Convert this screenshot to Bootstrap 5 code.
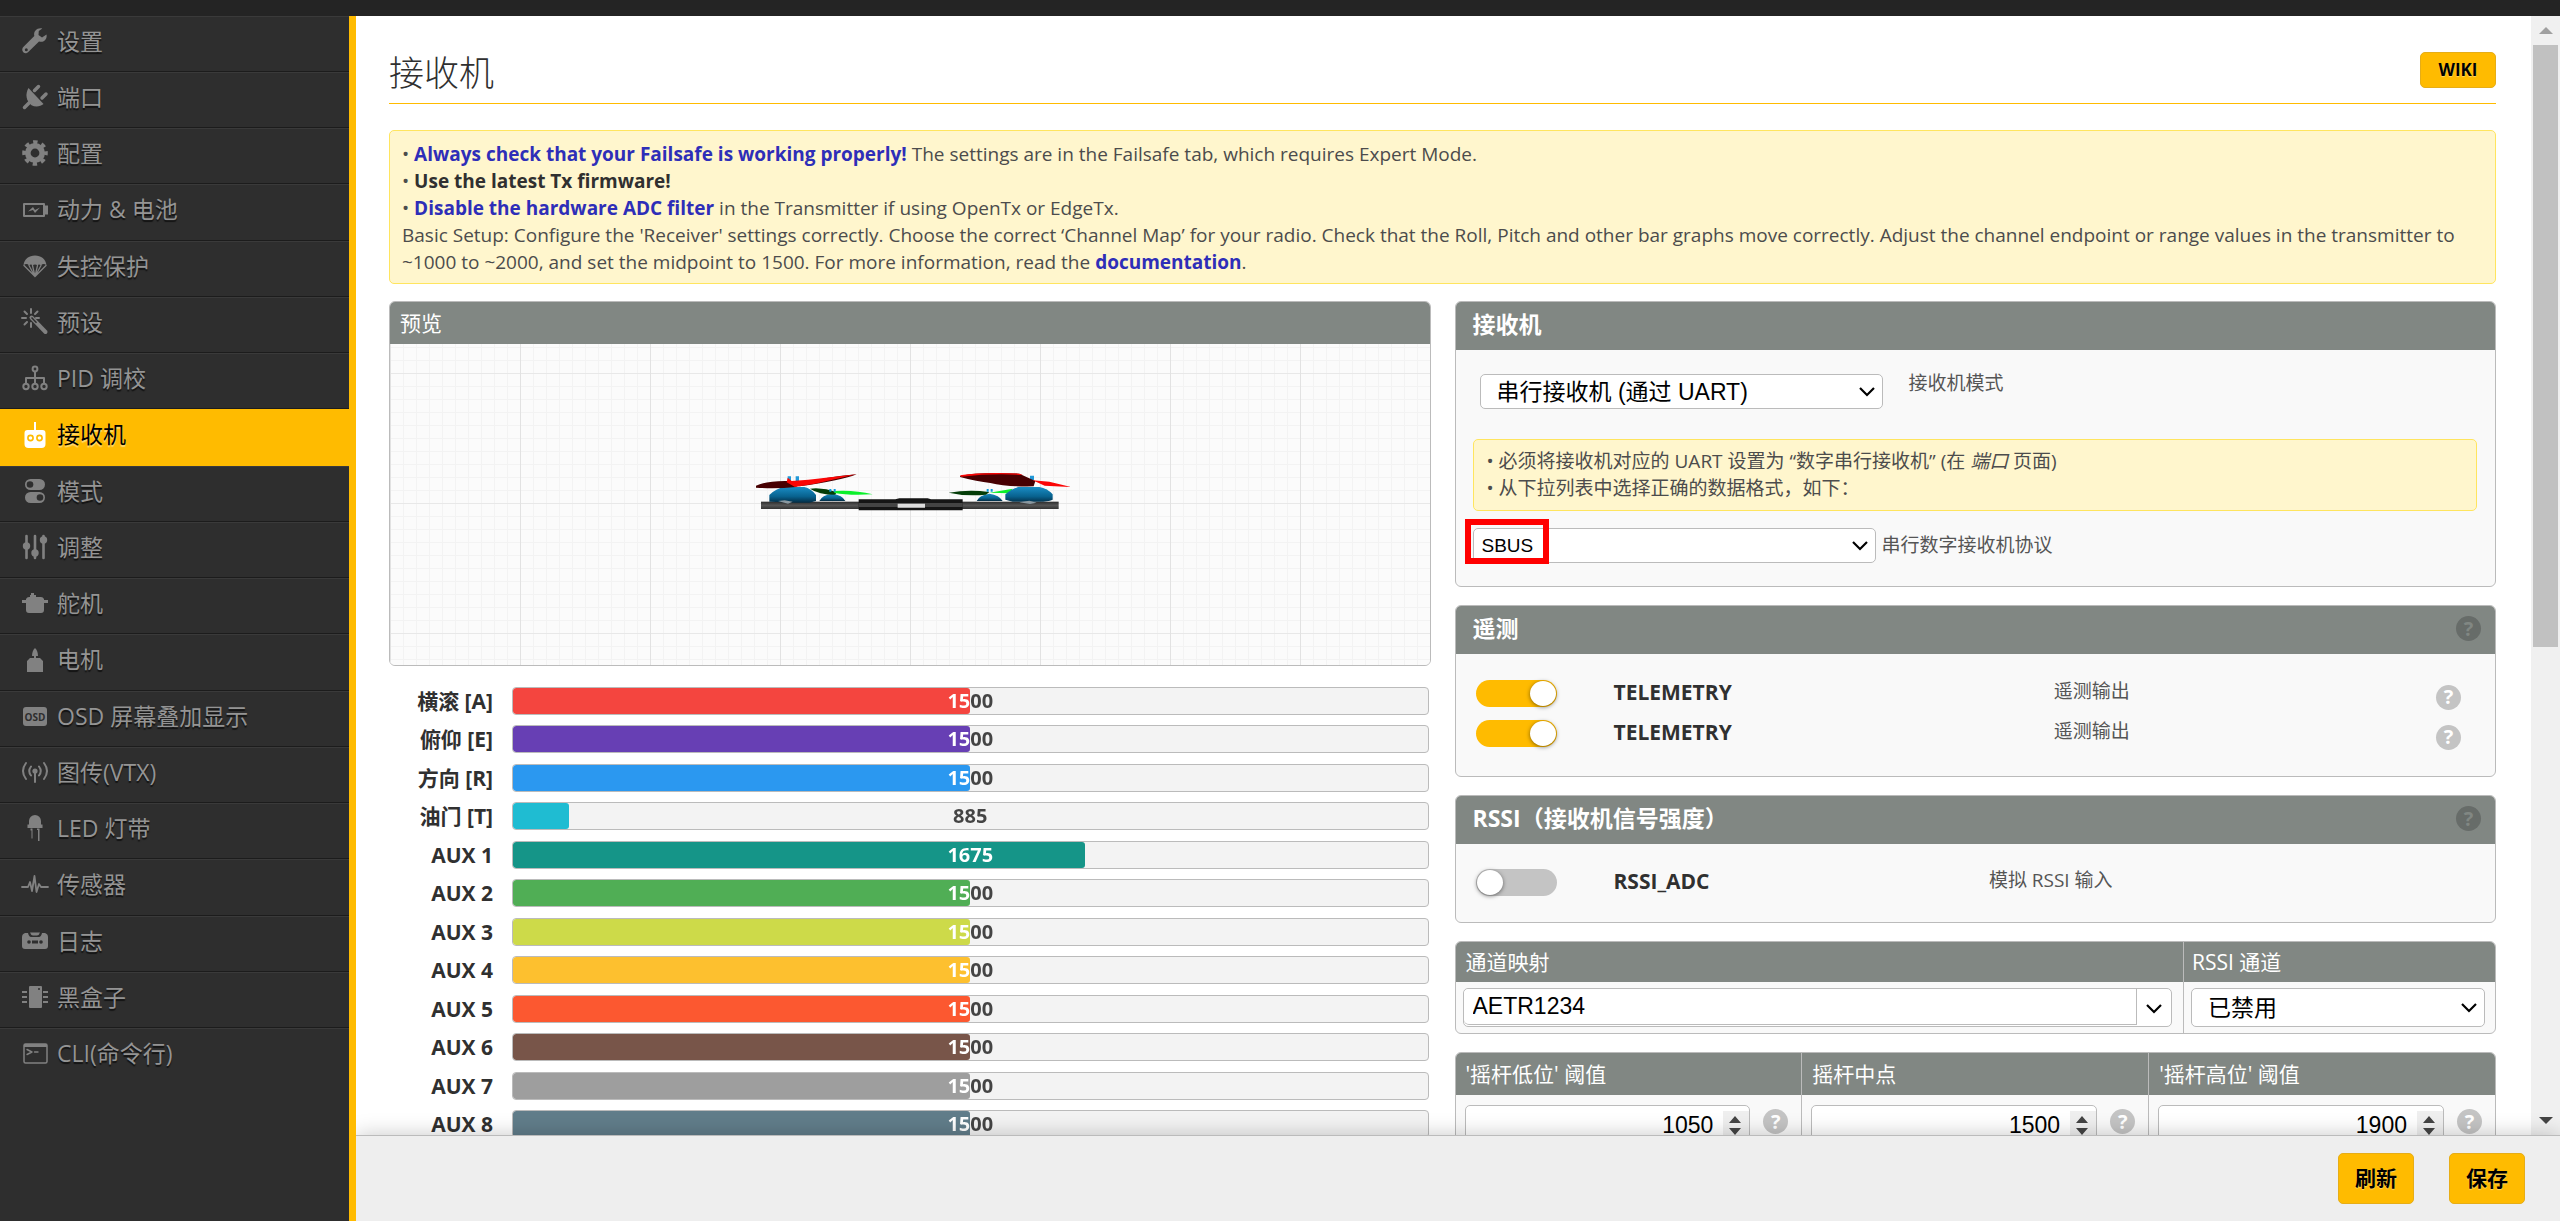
<!DOCTYPE html>
<html lang="zh-CN">
<head>
<meta charset="utf-8">
<meta name="viewport" content="width=device-width, initial-scale=1">
<title>接收机</title>
<link href="https://cdn.jsdelivr.net/npm/bootstrap@5.3.0/dist/css/bootstrap.min.css" rel="stylesheet">
<style>
:root{--accent:#ffbb00;--head:#818783;--line:#bbb;--panel:#f9f9f9}
body{font-family:"Open Sans","Noto Sans CJK SC",sans-serif;font-size:19px;line-height:27px;color:#303030;background:#fff}
.topbar{height:16px;background:#242424}
/* sidebar */
.side{width:356px;background:#2e2e2e;border-right:7px solid var(--accent)}
.side a{height:56px;padding:0 8px 6px 22px;gap:9px;font-size:23px;color:#949494;text-decoration:none;border-top:1px solid #3a3a3a;border-bottom:1px solid #1c1c1c;text-shadow:0 2px 1px rgba(0,0,0,.6);white-space:nowrap}
.side li:nth-child(4n) a{height:57px}
.side li:last-child a{border-bottom:0}
.side a.current{background:var(--accent);border-color:var(--accent);color:#000;text-shadow:0 2px 1px rgba(255,255,255,.45)}
.side svg{width:26px;height:26px;flex:none;fill:#818181;stroke:none;overflow:visible}
.side .ln{fill:none;stroke:#818181;stroke-width:2;stroke-linecap:round;stroke-linejoin:round}
.side .bk{fill:#2e2e2e}
.side a.current svg{fill:#fff}
/* main */
.content{padding:0 35px 0 33px}
.titlebar{height:88px;border-bottom:1px solid var(--accent)}
.titlebar h1{font-size:35px;font-weight:300;line-height:48px;padding-top:33px}
.gold{background:var(--accent);border:1px solid #e6ad17;border-radius:5px;color:#000;font-weight:700;text-shadow:0 1px 1px rgba(255,255,255,.4);padding:0}
.gold:hover{background:#ffc933}
.wiki{width:76px;height:36px;font-size:17px;line-height:32px;margin-top:36px}
.notice{background:#fff6cd;border:1px solid #ffe55f;border-radius:5px;color:#4c4c4c}
.notice a{color:#2e2eb8;font-weight:700;text-decoration:none}
.notice b{font-weight:700;color:#303030}
.notice.main{margin-top:26px;padding:10px 12px 7px}
.notice.sub{margin:0 18px 0 17px;padding:8px 13px}
.cols{--bs-gutter-x:24px;margin-top:17px}
.panel{border:1px solid var(--line);border-radius:6px;background:var(--panel);overflow:hidden}
.panel + .panel{margin-top:18px}
.panel-title{background:var(--head);color:#fff;margin:0}
.panel-title.big{font-size:23px;font-weight:700;line-height:45px;padding:0 14px 3px 17px}
.panel-title.mid{font-size:21px;font-weight:400;line-height:42px;padding:0 10px}
.panel-title.short{line-height:40px}
.panel-title.tight{padding-left:8px}
.canvas3d{height:321px;background-color:#fbfbfb;
 background-image:linear-gradient(90deg,#e2e2e2 1px,transparent 1px),linear-gradient(#e8e8e8 1px,transparent 1px),linear-gradient(90deg,#f3f3f3 1px,transparent 1px),linear-gradient(#f3f3f3 1px,transparent 1px);
 background-size:130px 130px,130px 130px,13px 13px,13px 13px;background-position:0 29px,0 29px,0 3px,0 3px}
.bars{margin-top:21px}
.bars li{height:28px;margin-bottom:10px}
.bars li:nth-child(even){margin-bottom:11px}
.bars .who{width:104px;font-weight:700;font-size:21px;line-height:28px;text-align:right}
.meter{height:28px;margin:0 2px 0 19px;background:#f3f3f3;border:1px solid var(--line);border-radius:4px;font-size:20px}
.meter .progress-bar{border-radius:3px;transition:none}
.meter .value{font-weight:700;line-height:25px;color:transparent;background:linear-gradient(90deg,#fff var(--v),#444 var(--v));-webkit-background-clip:text;background-clip:text}
.field{border:1px solid var(--line);border-radius:5px;background-color:#fff;color:#000;font-family:"Liberation Sans","Noto Sans CJK SC",sans-serif;font-size:23px;line-height:32px;padding:0 10px}
select.field{appearance:none;padding-left:16px;background-image:url("data:image/svg+xml,%3Csvg xmlns='http://www.w3.org/2000/svg' viewBox='0 0 16 12'%3E%3Cpath d='M1 2l7 7 7-7' fill='none' stroke='%23000' stroke-width='2.2'/%3E%3C/svg%3E");background-repeat:no-repeat;background-position:right 7px center;background-size:16px 12px}
.narrow{width:403px;height:35px}
select.text-s{font-size:19px;padding-left:8px}
.soft{color:#555}
.mode-row{padding:24px 24px 30px}
.mode-label{margin-left:26px;line-height:19px}
.proto-row{padding:17px 17px 23px;gap:6px}
.pick{left:-8px;top:-9px;width:84px;height:45px;border:6px solid #f00;pointer-events:none}
.tele{padding:19px 0 23px}
.rssi{padding:18px 0 20px}
.opt{height:40px;padding-left:20px}
.opt .label{margin-left:57px;font-weight:700;font-size:21px;padding-right:28px;line-height:38px;padding-bottom:2px}
.opt .desc{line-height:34px;padding-bottom:4px}
.opt .qm{margin:8px 34px 0 12px}
.opt .qm-gap{width:131px}
.toggle{appearance:none;position:relative;width:81px;height:27px;margin:0;border-radius:14px;background:#c4c4c4;flex:none}
.toggle:checked{background:var(--accent)}
.toggle::before{content:"";position:absolute;left:1px;top:1px;width:26px;height:25px;border-radius:50%;background:#fff;box-shadow:0 1px 4px rgba(0,0,0,.5)}
.toggle:checked::before{left:54px}
.qm{width:25px;height:25px;border:0;padding:0;border-radius:50%;background:#c4c4c4;color:#fff;font-weight:700;font-size:20px;line-height:24px;flex:none;text-align:center}
.qm.dark{background:#676c69;color:#818783}
.cell + .cell{border-left:1px solid var(--line)}
.spin{appearance:textfield;text-align:right;height:40px;line-height:36px;padding-right:36px;min-width:0;background-image:url("data:image/svg+xml,%3Csvg xmlns='http://www.w3.org/2000/svg' viewBox='0 0 26 28'%3E%3Cpath d='M0 0h26v28H0z' fill='%23efefef'/%3E%3Cpath d='M6 12l6-7 6 7zM6 17h12l-6 7z' fill='%23444'/%3E%3C/svg%3E");background-repeat:no-repeat;background-position:right 0 center;background-size:26px 28px}
.spin::-webkit-inner-spin-button{appearance:none}
.combo{height:39px}
.combo input{border:0;border-right:1px solid var(--line);border-bottom:1px solid var(--line);border-radius:5px 0 0 5px;height:36px;padding-left:9px}
.combo button{width:34px;border:0;background:none;padding:0}
.map-cell{width:312px}
.map-body{padding:6px 11px 6px 7px}
.map-body.right{padding-right:10px}
.sticks .cell{flex:1 1 0;min-width:0}
.stick-body{padding:10px 13px 10px 9px;gap:13px}
.stick-body .qm{margin-top:4px}
.scroller{width:29px;background:#f0f0f0}
.thumb{width:25px;height:602px;background:#c1c1c1}
.arrow{height:29px}
.footbar{height:86px;background:#eee;border-top:1px solid var(--line);box-shadow:0 0 20px rgba(0,0,0,.22);padding:17px 35px 0;gap:35px;z-index:2}
.footbar .gold{height:51px;width:76px;font-size:21px}
</style>
</head>
<body class="vh-100 d-flex flex-column overflow-hidden">
<header class="topbar flex-shrink-0"></header>
<div class="d-flex flex-grow-1 overflow-hidden">
<nav class="side flex-shrink-0">
<ul class="list-unstyled m-0">
<li><a href="#" class="d-flex align-items-center"><svg viewBox="0 0 26 26"><path d="M24.500 6.500l-4.500 3-3.500-2.500.3-4 3.500-2.500c-5-1-9 2.500-8 7.500L1.800 18.600a3.600 3.600 0 1 0 5 5L17 13.500c5 1.500 8.500-2.500 7.500-7zM4.300 20.200a1.500 1.500 0 1 1 0 3 1.500 1.500 0 0 1 0-3z"/></svg>设置</a></li>
<li><a href="#" class="d-flex align-items-center"><svg viewBox="0 0 26 26"><path d="M6.500 4l15 16c-3 2.600-8 3.500-12 1.200C4 17 3 10 6.500 4z"/><path class="ln" style="stroke-width:3.500" d="M12.500 6.500l4-4M20 14l4-4M2.500 23.500l5-5"/></svg>端口</a></li>
<li><a href="#" class="d-flex align-items-center"><svg viewBox="0 0 26 26"><circle cx="13" cy="13" r="7.200" fill="none" stroke="#818181" stroke-width="5.600"/><circle cx="13" cy="13" r="10.500" fill="none" stroke="#818181" stroke-width="4.600" stroke-dasharray="4.200 4.047" stroke-dashoffset="2.100"/></svg>配置</a></li>
<li><a href="#" class="d-flex align-items-center"><svg viewBox="0 0 26 26"><path class="ln" d="M2 7h20v12H2z"/><path d="M23 8.500h3v9h-3zM6 14.500l5-4.500 2 3 5-2.500-5 5.500-2-3z"/></svg>动力 &amp; 电池</a></li>
<li><a href="#" class="d-flex align-items-center"><svg viewBox="0 0 26 26"><path d="M1.500 12.500C2 6 7 2.500 13 2.500S24 6 24.500 12.500c-2-2-4-1.800-5.500 0-1.500-1.500-2.500-1.500-3.500 0-1.500-1.500-3.500-1.500-5 0-1-1.500-2-1.500-3.500 0-1.500-1.800-3.500-2-5.500 0z"/><path class="ln" style="stroke-width:1.300" d="M2 12.500l11 11 11-11M7 12.500l6 11 6-11M10.500 12.500l2.500 11 2.500-11"/></svg>失控保护</a></li>
<li><a href="#" class="d-flex align-items-center"><svg viewBox="0 0 26 26"><path class="ln" d="M9 0v4M2.500 2.500L5 5M15.500 2.500L13 5M0 9h4M2.500 15.500L5 13M9 14v4M14 9h3" stroke-linecap="butt"/><path class="ln" style="stroke-width:4" d="M9.500 8.500L23.500 23"/><path d="M9.500 8.500l5 5.200" stroke="#2e2e2e" stroke-width="1.500"/></svg>预设</a></li>
<li><a href="#" class="d-flex align-items-center"><svg viewBox="0 0 26 26"><g class="ln"><circle cx="13" cy="4" r="2.400"/><circle cx="4" cy="21.500" r="2.700"/><circle cx="13" cy="21.500" r="2.700"/><circle cx="22" cy="21.500" r="2.700"/><path d="M13 7v11M4 18v-5h18v5"/></g></svg>PID 调校</a></li>
<li><a href="#" class="d-flex align-items-center current" aria-current="page"><svg viewBox="0 0 26 26"><path d="M12 0h2v8h6.500a3 3 0 0 1 3 3v11a4 4 0 0 1-4 4h-13a4 4 0 0 1-4-4V11a3 3 0 0 1 3-3H12z"/><circle cx="8.500" cy="16" r="2.600" stroke="#fb0" stroke-width="1.600"/><circle cx="17.500" cy="16" r="2.600" stroke="#fb0" stroke-width="1.600"/></svg>接收机</a></li>
<li><a href="#" class="d-flex align-items-center"><svg viewBox="0 0 26 26"><rect x="3" y="1" width="20" height="11" rx="5.500"/><rect x="3" y="14" width="20" height="11" rx="5.500"/><circle class="bk" cx="8" cy="6.500" r="3.300"/><circle class="bk" cx="18" cy="19.500" r="3.300"/></svg>模式</a></li>
<li><a href="#" class="d-flex align-items-center"><svg viewBox="0 0 26 26"><path class="ln" style="stroke-width:2.600" d="M4.500 2v22M13 2v22M21.500 2v22"/><circle cx="4.500" cy="12" r="3.700"/><circle cx="13" cy="19" r="3.700"/><circle cx="21.500" cy="6" r="3.700"/></svg>调整</a></li>
<li><a href="#" class="d-flex align-items-center"><svg viewBox="0 0 26 26"><path d="M8 5h1V3h3v2h2v2h5q2 0 3 2v1h4v3h-4v7q0 3-3 3H7q-3 0-3-3v-7H0v-3h4V9q1-2 3-2h1z"/></svg>舵机</a></li>
<li><a href="#" class="d-flex align-items-center"><svg viewBox="0 0 26 26"><path d="M13 1c2 1.500 3 5 3 8h-2v2h4l3 3v11H5V14l3-3h4V9h-2c0-3 1-6.500 3-8z"/></svg>电机</a></li>
<li><a href="#" class="d-flex align-items-center"><svg viewBox="0 0 26 26"><rect x="1" y="4" width="24" height="19" rx="3"/><text class="bk" x="13" y="17.500" font-size="10" font-weight="700" text-anchor="middle" style="text-shadow:none">OSD</text></svg>OSD 屏幕叠加显示</a></li>
<li><a href="#" class="d-flex align-items-center"><svg viewBox="0 0 26 26"><circle cx="13" cy="12" r="2.600"/><path class="ln" d="M13 12v11M9 7.500q-3.500 4.500 0 9M17 7.500q3.500 4.500 0 9M4 4q-6 8 0 16M22 4q6 8 0 16"/></svg>图传(VTX)</a></li>
<li><a href="#" class="d-flex align-items-center"><svg viewBox="0 0 26 26"><path d="M7 9.500V6a6 6 0 0 1 12 0v3.500h1.500V13h-15V9.500zM8.500 13.500h2v10h-1v-8h-1zM15 13.500h2.500V26H16V15h-1z"/></svg>LED 灯带</a></li>
<li><a href="#" class="d-flex align-items-center"><svg viewBox="0 0 26 26"><path class="ln" style="stroke-width:1.800" d="M0 15h6l2-5 2 9 2.500-15 2 16 2.500-8 2 3h7"/></svg>传感器</a></li>
<li><a href="#" class="d-flex align-items-center"><svg viewBox="0 0 26 26"><path d="M3 5h3q1 4 3 4h8q2 0 3-4h3q3 1 3 4v9q0 3-3 3H3q-3 0-3-3V9q0-3 3-4zM8 4.500h10q-1 3-3 3h-4q-2 0-3-3z"/><g class="bk"><circle cx="7" cy="14" r="1.800"/><circle cx="19" cy="14" r="1.800"/><rect x="10" y="12.500" width="6" height="3"/></g></svg>日志</a></li>
<li><a href="#" class="d-flex align-items-center"><svg viewBox="0 0 26 26"><path d="M8 2h11q1 0 1 1v20q0 1-1 1H8q-1 0-1-1V3q0-1 1-1z"/><path d="M0 8h5M0 13h5M0 18h5M21 8h5M21 13h5M21 18h5" stroke="#818181" stroke-width="2"/><circle class="bk" cx="17" cy="5" r="1"/></svg>黑盒子</a></li>
<li><a href="#" class="d-flex align-items-center"><svg viewBox="0 0 26 26"><rect class="ln" style="stroke-width:1.500" x="2" y="3" width="23" height="19" rx="1.500"/><path d="M2 3h23v3H2z"/><path class="ln" style="stroke-width:1.400" d="M5 8.500l5 2.500-5 2.500M12.500 11h3.500"/></svg>CLI(命令行)</a></li>
</ul>
</nav>
<div class="d-flex flex-column flex-grow-1 overflow-hidden">
<div class="d-flex flex-grow-1 overflow-hidden">
<main class="content flex-grow-1 overflow-hidden">
<div class="titlebar d-flex justify-content-between align-items-start">
<h1 class="m-0">接收机</h1>
<button type="button" class="btn gold wiki">WIKI</button>
</div>
<div class="notice main">
<div>• <a href="#">Always check that your Failsafe is working properly!</a> The settings are in the Failsafe tab, which requires Expert Mode.</div>
<div>• <b>Use the latest Tx firmware!</b></div>
<div>• <a href="#">Disable the hardware ADC filter</a> in the Transmitter if using OpenTx or EdgeTx.</div>
<div>Basic Setup: Configure the 'Receiver' settings correctly. Choose the correct ‘Channel Map’ for your radio. Check that the Roll, Pitch and other bar graphs move correctly. Adjust the channel endpoint or range values in the transmitter to ~1000 to ~2000, and set the midpoint to 1500. For more information, read the <a href="#">documentation</a>.</div>
</div>
<div class="row cols">
<div class="col-6">
<section class="panel">
<h2 class="panel-title mid">预览</h2>
<div class="canvas3d d-flex align-items-center justify-content-center">
<svg width="320" height="80" viewBox="92 132 960 240" role="img" aria-label="3D">
<defs><linearGradient id="motor" x1="0" y1="0" x2="0" y2="1"><stop offset="0" stop-color="#1a8cc4"/><stop offset=".6" stop-color="#08628f"/><stop offset="1" stop-color="#032c44"/></linearGradient><linearGradient id="arm" x1="0" y1="0" x2="0" y2="1"><stop offset="0" stop-color="#2c2c2c"/><stop offset=".5" stop-color="#555"/><stop offset="1" stop-color="#333"/></linearGradient></defs>
<path d="M300 240q8-18 38-22 32 4 40 22z M772 240q8-18 38-22 30 4 40 22z" fill="url(#motor)"/>
<path d="M272 203q40-4 80 10l-4 8q-50 0-76-18zM688 215q60-10 122-2l-10 8q-60 6-112-6z" fill="#043d08"/>
<path d="M345 210q60-4 115 10-70 4-115-4zM810 215l70-12-10 14zM970 203l16 4-12 4z" fill="#0bf02b"/>
<path d="M330 204h6v8h-6zM343 204h6v8h-6zM802 204h6v8h-6zM814 204h6v8h-6z" fill="#0a9ada"/>
<rect x="125" y="242" width="893" height="22" fill="url(#arm)"/>
<path d="M418 235h110l12-3h85l10 3h95v33H418z" fill="#151515"/><path d="M418 246h312v12H418z" fill="#444"/><path d="M535 248h82v12h-82z" fill="#ddd"/>
<path d="M150 242v-20q20-20 45-24h60q20 4 35 24v18l-20 5h-40zM858 236v-16q20-18 40-22h62q24 4 40 22v16q-15 6-40 6h-80z" fill="url(#motor)"/>
<path d="M176 240l20-2 24 4-14 6zM900 244l30-5 22 6-20 4z" fill="#8a98a0"/>
<path d="M205 166h10v14h-10zM229 166h10v14h-10zM932 164h12v14h-12z" fill="#2299d8"/>
<path d="M110 194q35-16 100-14l30 8-10 10q-60 6-120 2zM240 192q80-26 172-32-50 20-172 36zM722 166q50-14 178-8l48 22-5 16q-80 2-130-10-40-4-91-18z" fill="#470002"/>
<path d="M205 170l12 10 50-4 145-16-125 28-60 10-25-14zM722 163q70-10 178-5l10 4q-90-6-184 5zM940 178l50 4 66 16-80-4z" fill="#fb0505"/>
</svg>
</div>
</section>
<ul class="bars list-unstyled mb-0">
<li class="d-flex"><span class="who">横滚 [A]</span><div class="meter progress flex-grow-1 position-relative"><div class="progress-bar" style="width:50%;background:#f4453f"></div><span class="value position-absolute w-100 text-center" style="--v:50%">1500</span></div></li>
<li class="d-flex"><span class="who">俯仰 [E]</span><div class="meter progress flex-grow-1 position-relative"><div class="progress-bar" style="width:50%;background:#673fb4"></div><span class="value position-absolute w-100 text-center" style="--v:50%">1500</span></div></li>
<li class="d-flex"><span class="who">方向 [R]</span><div class="meter progress flex-grow-1 position-relative"><div class="progress-bar" style="width:50%;background:#2b98f0"></div><span class="value position-absolute w-100 text-center" style="--v:50%">1500</span></div></li>
<li class="d-flex"><span class="who">油门 [T]</span><div class="meter progress flex-grow-1 position-relative"><div class="progress-bar" style="width:6.1%;background:#1fbcd2"></div><span class="value position-absolute w-100 text-center" style="--v:6.1%">885</span></div></li>
<li class="d-flex"><span class="who">AUX 1</span><div class="meter progress flex-grow-1 position-relative"><div class="progress-bar" style="width:62.5%;background:#159588"></div><span class="value position-absolute w-100 text-center" style="--v:62.5%">1675</span></div></li>
<li class="d-flex"><span class="who">AUX 2</span><div class="meter progress flex-grow-1 position-relative"><div class="progress-bar" style="width:50%;background:#50ae55"></div><span class="value position-absolute w-100 text-center" style="--v:50%">1500</span></div></li>
<li class="d-flex"><span class="who">AUX 3</span><div class="meter progress flex-grow-1 position-relative"><div class="progress-bar" style="width:50%;background:#cdda49"></div><span class="value position-absolute w-100 text-center" style="--v:50%">1500</span></div></li>
<li class="d-flex"><span class="who">AUX 4</span><div class="meter progress flex-grow-1 position-relative"><div class="progress-bar" style="width:50%;background:#fdc02f"></div><span class="value position-absolute w-100 text-center" style="--v:50%">1500</span></div></li>
<li class="d-flex"><span class="who">AUX 5</span><div class="meter progress flex-grow-1 position-relative"><div class="progress-bar" style="width:50%;background:#fc5830"></div><span class="value position-absolute w-100 text-center" style="--v:50%">1500</span></div></li>
<li class="d-flex"><span class="who">AUX 6</span><div class="meter progress flex-grow-1 position-relative"><div class="progress-bar" style="width:50%;background:#785549"></div><span class="value position-absolute w-100 text-center" style="--v:50%">1500</span></div></li>
<li class="d-flex"><span class="who">AUX 7</span><div class="meter progress flex-grow-1 position-relative"><div class="progress-bar" style="width:50%;background:#9e9e9e"></div><span class="value position-absolute w-100 text-center" style="--v:50%">1500</span></div></li>
<li class="d-flex"><span class="who">AUX 8</span><div class="meter progress flex-grow-1 position-relative"><div class="progress-bar" style="width:50%;background:#617d8a"></div><span class="value position-absolute w-100 text-center" style="--v:50%">1500</span></div></li>
</ul>
</div>
<div class="col-6">
<section class="panel">
<h2 class="panel-title big">接收机</h2>
<div class="d-flex align-items-start mode-row">
<select id="mode" class="field narrow"><option>串行接收机 (通过 UART)</option></select>
<label for="mode" class="soft mode-label">接收机模式</label>
</div>
<div class="notice sub">
<div>• 必须将接收机对应的 UART 设置为 “数字串行接收机” (在 <i>端口</i> 页面)</div>
<div>• 从下拉列表中选择正确的数据格式，如下：</div>
</div>
<div class="d-flex align-items-center proto-row">
<div class="position-relative"><select id="proto" class="field narrow text-s d-block"><option>SBUS</option></select><span class="pick position-absolute"></span></div>
<label for="proto" class="soft">串行数字接收机协议</label>
</div>
</section>
<section class="panel">
<h2 class="panel-title big d-flex align-items-center justify-content-between">遥测<button type="button" class="qm dark" aria-label="帮助">?</button></h2>
<div class="tele">
<div class="opt d-flex align-items-center"><input class="toggle" type="checkbox" role="switch" id="t1" checked><label class="label" for="t1">TELEMETRY</label><span class="desc soft flex-grow-1 text-center">遥测输出</span><button type="button" class="qm" aria-label="帮助">?</button></div>
<div class="opt d-flex align-items-center"><input class="toggle" type="checkbox" role="switch" id="t2" checked><label class="label" for="t2">TELEMETRY</label><span class="desc soft flex-grow-1 text-center">遥测输出</span><button type="button" class="qm" aria-label="帮助">?</button></div>
</div>
</section>
<section class="panel">
<h2 class="panel-title big d-flex align-items-center justify-content-between">RSSI（接收机信号强度）<button type="button" class="qm dark" aria-label="帮助">?</button></h2>
<div class="rssi">
<div class="opt d-flex align-items-center"><input class="toggle" type="checkbox" role="switch" id="r1"><label class="label" for="r1">RSSI_ADC</label><span class="desc soft flex-grow-1 text-center">模拟 RSSI 输入</span><span class="qm-gap"></span></div>
</div>
</section>
<section class="panel d-flex">
<div class="cell flex-grow-1">
<h3 class="panel-title mid short"><label for="map">通道映射</label></h3>
<div class="map-body"><div class="field combo d-flex p-0"><input id="map" class="field flex-grow-1" value="AETR1234"><button type="button" aria-label="选择"><svg width="16" height="12" viewBox="0 0 16 12"><path d="M1 2l7 7 7-7" fill="none" stroke="#000" stroke-width="2.200"/></svg></button></div></div>
</div>
<div class="cell map-cell flex-shrink-0">
<h3 class="panel-title mid short tight"><label for="rch">RSSI 通道</label></h3>
<div class="map-body right"><select id="rch" class="field combo w-100 d-block"><option>已禁用</option></select></div>
</div>
</section>
<section class="panel sticks d-flex">
<div class="cell"><h3 class="panel-title mid"><label for="s1">'摇杆低位' 阈值</label></h3><div class="stick-body d-flex"><input id="s1" type="number" class="field spin flex-grow-1" value="1050"><button type="button" class="qm" aria-label="帮助">?</button></div></div>
<div class="cell"><h3 class="panel-title mid"><label for="s2">摇杆中点</label></h3><div class="stick-body d-flex"><input id="s2" type="number" class="field spin flex-grow-1" value="1500"><button type="button" class="qm" aria-label="帮助">?</button></div></div>
<div class="cell"><h3 class="panel-title mid"><label for="s3">'摇杆高位' 阈值</label></h3><div class="stick-body d-flex"><input id="s3" type="number" class="field spin flex-grow-1" value="1900"><button type="button" class="qm" aria-label="帮助">?</button></div></div>
</section>
</div>
</div>
</main>
<div class="scroller flex-shrink-0 d-flex flex-column align-items-center" aria-hidden="true">
<div class="arrow d-flex align-items-center"><svg width="14" height="7" viewBox="0 0 14 7"><path d="M0 7l7-7 7 7z" fill="#a0a0a0"/></svg></div>
<div class="thumb"></div>
<div class="arrow d-flex align-items-center mt-auto"><svg width="14" height="7" viewBox="0 0 14 7"><path d="M0 0h14L7 7z" fill="#444"/></svg></div>
</div>
</div>
<footer class="footbar d-flex justify-content-end align-items-start flex-shrink-0 position-relative">
<button type="button" class="btn gold">刷新</button>
<button type="button" class="btn gold">保存</button>
</footer>
</div>
</div>
<script src="https://cdn.jsdelivr.net/npm/bootstrap@5.3.0/dist/js/bootstrap.bundle.min.js"></script>
</body>
</html>
